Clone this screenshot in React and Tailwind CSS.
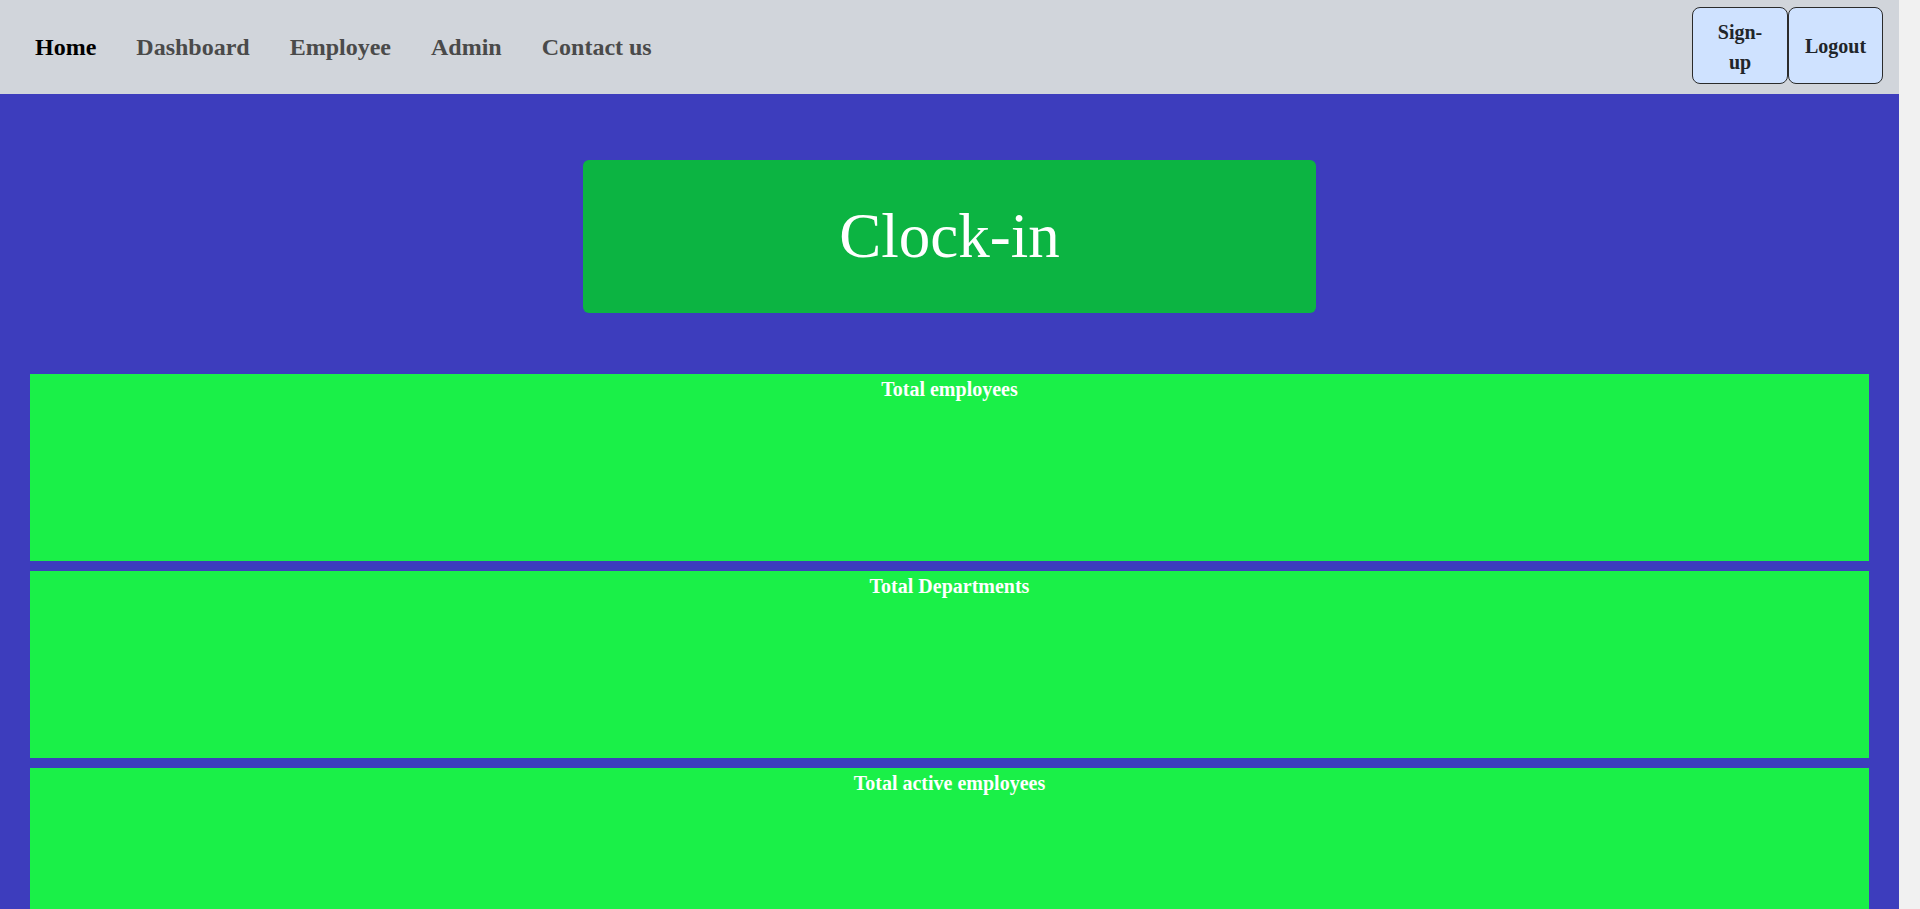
import React from 'react';

const links = [
  { name: 'Home', active: true },
  { name: 'Dashboard' },
  { name: 'Employee' },
  { name: 'Admin' },
  { name: 'Contact us' },
];

const stats = ['Total employees', 'Total Departments', 'Total active employees'];

export default function App() {
  return (
    <div className="min-h-screen bg-[#f1f1f1] pr-[21px] font-['Liberation_Serif','Times_New_Roman',serif]">
      <div className="min-h-screen bg-[#3d3dbd]">
        {/* Top bar */}
        <header className="flex h-[94px] items-center justify-between bg-[#d1d5db] pl-[35px] pr-[16px]">
          <nav className="flex items-center gap-[40px]">
            {links.map((link) => (
              <a
                key={link.name}
                href="#"
                className={`text-[24px] font-bold ${link.active ? 'text-black' : 'text-[#4a4a4a]'}`}
              >
                {link.name}
              </a>
            ))}
          </nav>

          <div className="flex items-center self-start pt-[7px]">
            <button className="flex h-[77px] w-[96px] items-center justify-center rounded-lg border border-[#2b2b2b] bg-[#cfe2ff] px-[18px] pt-[2px] text-[20px] font-bold leading-[30px] text-[#212529]">
              Sign-up
            </button>
            <button className="flex h-[77px] w-[95px] items-center justify-center rounded-lg border border-[#2b2b2b] bg-[#cfe2ff] px-[10px] text-[20px] font-bold leading-[30px] text-[#212529]">
              Logout
            </button>
          </div>
        </header>

        {/* Clock-in */}
        <div className="flex justify-center pt-[66px] pb-[61px]">
          <button className="flex h-[153px] w-[733px] items-center justify-center rounded-md bg-[#0cb442] text-[63px] leading-none text-white">
            Clock-in
          </button>
        </div>

        {/* Stats */}
        <div className="flex flex-col gap-[10px] px-[30px] pb-[190px]">
          {stats.map((title) => (
            <div key={title} className="h-[187px] bg-[#1af048] pt-[4px] text-center">
              <h3 className="text-[20px] font-bold leading-[23px] text-white">{title}</h3>
            </div>
          ))}
        </div>
      </div>
    </div>
  );
}
